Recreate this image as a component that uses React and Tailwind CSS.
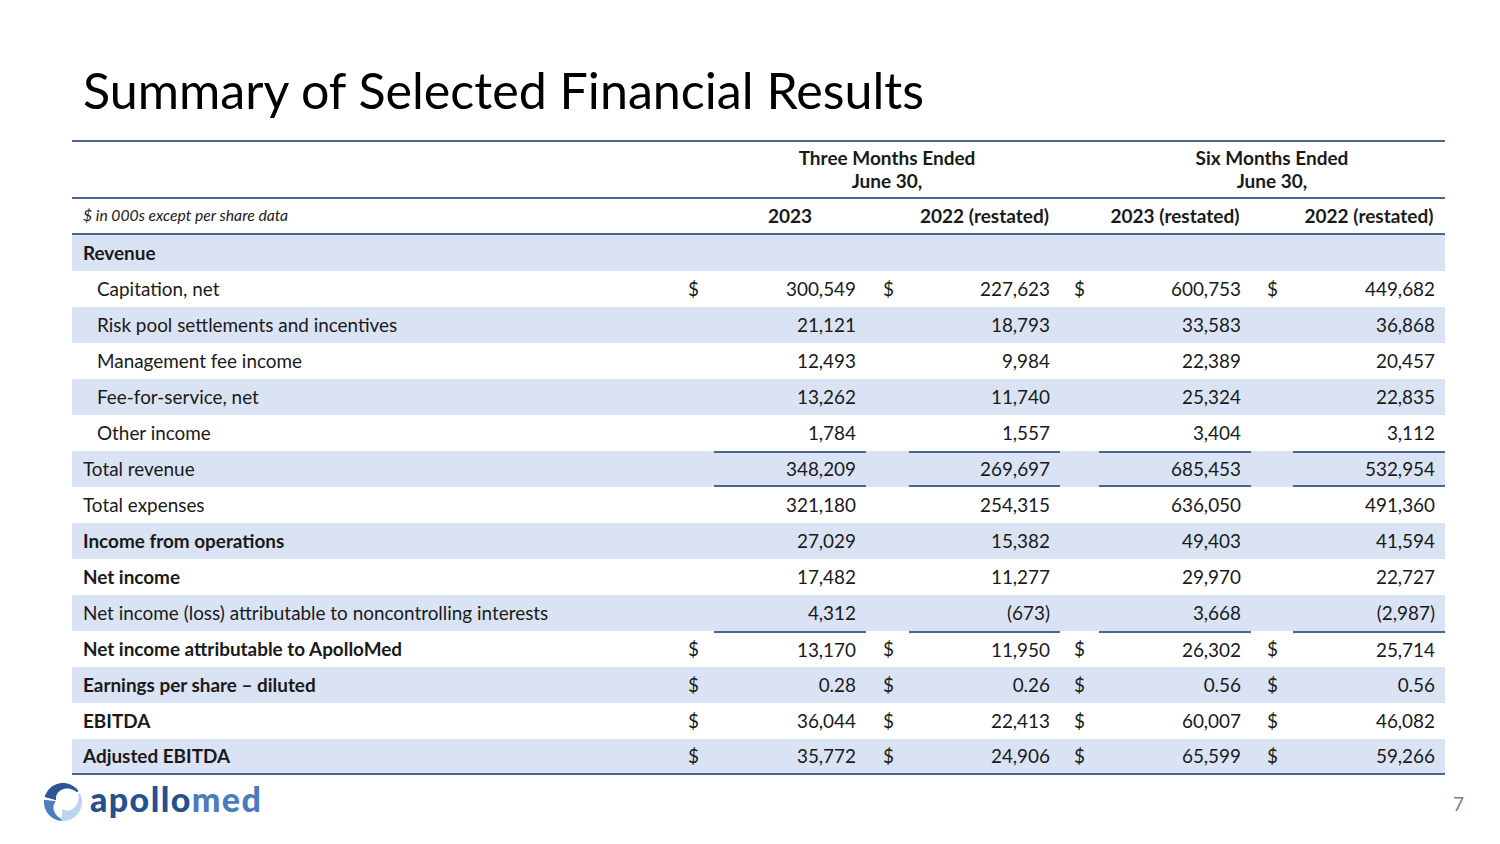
import React from "react";

const LINE = "border-[#4b6592]";

function seg(cx, cy, a1, a2, thickStart) {
  const n = 24;
  const pts = [];
  const rad = (d) => (d * Math.PI) / 180;
  const R = 19;
  for (let i = 0; i <= n; i++) {
    const a = a1 + ((a2 - a1) * i) / n;
    pts.push([cx + R * Math.cos(rad(a)), cy + R * Math.sin(rad(a))]);
  }
  for (let i = n; i >= 0; i--) {
    const a = a1 + ((a2 - a1) * i) / n;
    const t = i / n;
    const rr = thickStart ? 7 + 10 * t : 17 - 10 * t;
    pts.push([cx + rr * Math.cos(rad(a)), cy + rr * Math.sin(rad(a))]);
  }
  return "M" + pts.map((p) => p[0].toFixed(2) + " " + p[1].toFixed(2)).join(" L") + " Z";
}

function Logo() {
  return (
    <div className="flex items-center gap-[5px]">
      <svg width="44" height="44" viewBox="0 0 44 44">
        <path d={seg(22, 22, 195, 325, true)} fill="#2a5597" />
        <path d={seg(22, 22, 333, 455, false)} fill="#bcd2ee" />
        <path d={seg(22, 22, 95, 187, false)} fill="#4e7dbf" />
      </svg>
      <div className="text-[34px] font-black leading-none tracking-[1.4px] pb-[6px]" style={{ fontFamily: "Lato, sans-serif" }}>
        <span className="text-[#23508f]">apollo</span>
        <span className="text-[#4a7cbf]">med</span>
      </div>
    </div>
  );
}

const rows = [
  { label: "Revenue", bold: true, shade: true, vals: null },
  { label: "Capitation, net", indent: true, dollar: true, vals: ["300,549", "227,623", "600,753", "449,682"] },
  { label: "Risk pool settlements and incentives", indent: true, shade: true, vals: ["21,121", "18,793", "33,583", "36,868"] },
  { label: "Management fee income", indent: true, vals: ["12,493", "9,984", "22,389", "20,457"] },
  { label: "Fee-for-service, net", indent: true, shade: true, vals: ["13,262", "11,740", "25,324", "22,835"] },
  { label: "Other income", indent: true, vals: ["1,784", "1,557", "3,404", "3,112"] },
  { label: "Total revenue", shade: true, top: true, bottom: true, vals: ["348,209", "269,697", "685,453", "532,954"] },
  { label: "Total expenses", vals: ["321,180", "254,315", "636,050", "491,360"] },
  { label: "Income from operations", bold: true, shade: true, vals: ["27,029", "15,382", "49,403", "41,594"] },
  { label: "Net income", bold: true, vals: ["17,482", "11,277", "29,970", "22,727"] },
  { label: "Net income (loss) attributable to noncontrolling interests", shade: true, vals: ["4,312", "(673)", "3,668", "(2,987)"] },
  { label: "Net income attributable to ApolloMed", bold: true, dollar: true, top: true, vals: ["13,170", "11,950", "26,302", "25,714"] },
  { label: "Earnings per share \u2013 diluted", bold: true, dollar: true, shade: true, vals: ["0.28", "0.26", "0.56", "0.56"] },
  { label: "EBITDA", bold: true, dollar: true, vals: ["36,044", "22,413", "60,007", "46,082"] },
  { label: "Adjusted EBITDA", bold: true, dollar: true, shade: true, last: true, vals: ["35,772", "24,906", "65,599", "59,266"] },
];

const GRID = "grid grid-cols-[600px_42px_152px_43px_151px_39px_152px_42px_152px]";
const dollarPad = ["pl-[16px]", "pl-[17px]", "pl-[14px]", "pl-[16px]"];

function Row({ r }) {
  const cells = [];
  cells.push(
    <div key="l" className={`flex items-center ${r.indent ? "pl-[25px]" : "pl-[11px]"} ${r.bold ? "font-bold" : ""}`}>
      {r.label}
    </div>
  );
  for (let i = 0; i < 4; i++) {
    cells.push(
      <div key={"d" + i} className={`flex items-center ${dollarPad[i]}`}>
        {r.dollar ? "$" : ""}
      </div>
    );
    cells.push(
      <div
        key={"v" + i}
        className={`flex items-center justify-end pr-[10px] ${r.top ? `border-t-2 ${LINE}` : ""} ${r.bottom ? `border-b-2 ${LINE}` : ""}`}
      >
        {r.vals ? r.vals[i] : ""}
      </div>
    );
  }
  return (
    <div className={`${GRID} h-[36px] ${r.shade ? "bg-[#dae3f3]" : "bg-white"} ${r.last ? `border-b-2 ${LINE}` : ""}`}>
      {cells}
    </div>
  );
}

export default function App() {
  return (
    <div className="w-[1500px] h-[844px] bg-white text-[#1a1a1a] flex flex-col" style={{ fontFamily: "Lato, 'Open Sans', sans-serif" }}>
      <div className="h-[140px] pl-[84px] pt-[65px]">
        <h1 className="text-[50.2px] leading-none text-black -ml-[1px]">Summary of Selected Financial Results</h1>
      </div>
      <div className="ml-[72px] w-[1373px] text-[18.9px]">
        <div className={`border-t-2 ${LINE} ${GRID} h-[57px] font-bold text-[19px] leading-[23px]`}>
          <div />
          <div />
          <div className="col-span-3 flex flex-col items-center justify-center pb-[2px]">
            <span>Three Months Ended</span>
            <span>June 30,</span>
          </div>
          <div />
          <div className="col-span-3 flex flex-col items-center justify-center pb-[2px]">
            <span>Six Months Ended</span>
            <span>June 30,</span>
          </div>
        </div>
        <div className={`border-t-2 border-b-2 ${LINE} ${GRID} h-[38px] font-bold text-[19px]`}>
          <div className="flex items-center pl-[11px] italic font-normal text-[15.7px]">$ in 000s except per share data</div>
          <div />
          <div className="flex items-center justify-center">2023</div>
          <div />
          <div className="flex items-center justify-center">2022 (restated)</div>
          <div />
          <div className="flex items-center justify-center">2023 (restated)</div>
          <div />
          <div className="flex items-center justify-center">2022 (restated)</div>
        </div>
        {rows.map((r, i) => (
          <Row key={i} r={r} />
        ))}
      </div>
      <div className="flex items-center justify-between pl-[41px] pr-[36px] pt-[5px]">
        <Logo />
        <span className="text-[19px] text-[#7f7f7f] pt-[4px]">7</span>
      </div>
    </div>
  );
}
